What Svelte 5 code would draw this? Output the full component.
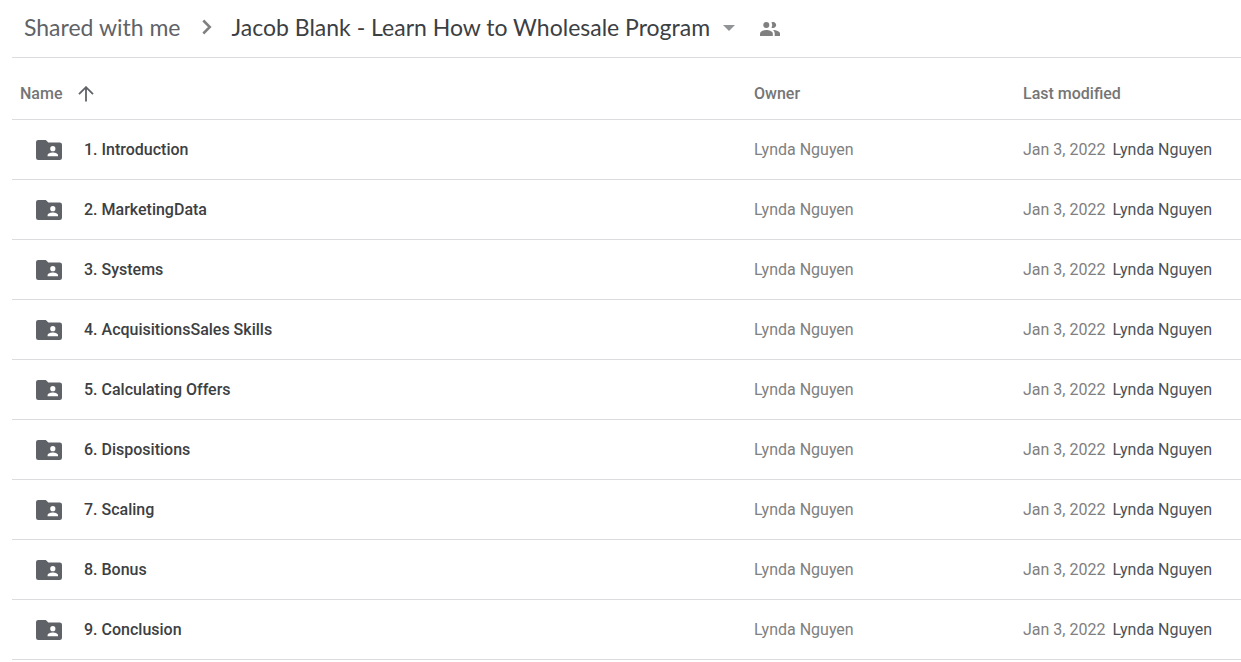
<script>
const folders = [
    '1. Introduction',
    '2. MarketingData',
    '3. Systems',
    '4. AcquisitionsSales Skills',
    '5. Calculating Offers',
    '6. Dispositions',
    '7. Scaling',
    '8. Bonus',
    '9. Conclusion'
].map((name) => ({
    name,
    owner: 'Lynda Nguyen',
    modified: 'Jan 3, 2022',
    modifiedBy: 'Lynda Nguyen'
}));

let ascending = $state(true);

let rows = $derived(ascending ? folders : [...folders].reverse());
</script>

<main class="drive">
    <nav class="path" aria-label="Folder path">
        <a class="crumb parent" href="#shared">Shared with me</a>
        <svg class="chevron" viewBox="0 0 10 16" aria-hidden="true">
            <path d="M1.3 1.5 7.8 8l-6.5 6.5" />
        </svg>
        <button class="crumb current">
            Jacob Blank - Learn How to Wholesale Program
            <svg class="caret" viewBox="0 0 12 6" aria-hidden="true">
                <path d="M0 0h12L6 6z" />
            </svg>
        </button>
        <button class="share" aria-label="Manage people">
            <svg viewBox="0 0 22 14" aria-hidden="true">
                <circle cx="7.3" cy="3" r="3" />
                <path d="M12.4.5a3 3 0 1 1 0 5 4.6 4.6 0 0 0 0-5z" />
                <path d="M1 14v-2.4C1 9.2 4.8 8 7.4 8s6.4 1.2 6.4 3.6V14z" />
                <path d="M14 8c2.7.2 7 1.3 7 3.6V14h-5.3v-2.4c0-1.6-.6-2.7-1.7-3.6z" />
            </svg>
        </button>
    </nav>

    <table>
        <thead>
            <tr>
                <th class="name">
                    <button class="sort" onclick={() => (ascending = !ascending)}>
                        Name
                        <svg class:down={!ascending} viewBox="0 0 16 16" aria-hidden="true">
                            <path d="M8 15.5V1.5M1 8.2l7-7 7 7" />
                        </svg>
                    </button>
                </th>
                <th class="owner">Owner</th>
                <th class="modified">Last modified</th>
            </tr>
        </thead>
        <tbody>
            {#each rows as row (row.name)}
                <tr>
                    <td class="name">
                        <div class="file">
                            <svg viewBox="0 0 26 20" aria-hidden="true">
                                <path d="M2.2 0h7.6l2.6 2.5h11.2A2.3 2.3 0 0 1 26 4.8v12.9a2.3 2.3 0 0 1-2.3 2.3H2.3A2.3 2.3 0 0 1 0 17.7V2.3A2.3 2.3 0 0 1 2.2 0z" />
                                <circle cx="16.8" cy="8.7" r="2.6" />
                                <path class="person" d="M11.6 16.2v-1.2c0-1.7 3.4-2.6 5.2-2.6s5.2.9 5.2 2.6v1.2z" />
                            </svg>
                            {row.name}
                        </div>
                    </td>
                    <td class="owner">{row.owner}</td>
                    <td class="modified">{row.modified} <span>{row.modifiedBy}</span></td>
                </tr>
            {/each}
        </tbody>
    </table>
</main>

<style>
:global(body) {
    margin: 0;
    background: #fff;
}

.drive {
    padding-left: 12px;
    font-family: Roboto, "Liberation Sans", sans-serif;
    font-size: 16px;
    line-height: 24px;
    color: #3c4043;
}

button {
    padding: 0;
    border: 0;
    background: none;
    font: inherit;
    color: inherit;
    cursor: pointer;
}

.path {
    display: flex;
    align-items: center;
    box-sizing: border-box;
    height: 58px;
    padding: 0 0 4px 12px;
    border-bottom: 1px solid #dadce0;
    white-space: nowrap;
}

.crumb {
    font-family: Lato, "Open Sans", sans-serif;
    font-size: 23px;
    line-height: 32px;
    text-decoration: none;
}

.parent {
    color: #5f6368;
}

.chevron {
    width: 10px;
    height: 16px;
    margin: 0 20px 0 21px;
    fill: none;
    stroke: #808080;
    stroke-width: 2.5;
}

.current {
    display: flex;
    align-items: center;
    gap: 13px;
}

.caret {
    width: 12px;
    height: 6px;
    margin-top: 2px;
    fill: #919497;
}

.share {
    display: flex;
    margin: 4px 0 0 24px;
}

.share svg {
    width: 22px;
    height: 14px;
    fill: #808080;
}

table {
    width: 100%;
    table-layout: fixed;
    border-collapse: separate;
    border-spacing: 0;
}

th,
td {
    height: 59px;
    padding: 0;
    border-bottom: 1px solid #dadce0;
    text-align: left;
    white-space: nowrap;
}

th {
    height: 62px;
    padding-top: 10px;
    box-sizing: border-box;
    font-weight: 500;
    color: #757575;
}

th.name {
    padding-left: 8px;
}

td.name {
    padding-left: 24px;
    font-weight: 500;
}

th.owner {
    width: 269px;
}

th.modified {
    width: 218px;
}

.sort {
    display: flex;
    align-items: center;
    gap: 16px;
}

.sort svg {
    width: 16px;
    height: 16px;
    fill: none;
    stroke: #5f6368;
    stroke-width: 1.8;
}

.sort svg.down {
    transform: rotate(180deg);
}

.file {
    display: flex;
    align-items: center;
    gap: 22px;
}

.file svg {
    width: 26px;
    height: 20px;
    fill: #5f6368;
}

.file circle,
.file .person {
    fill: #fff;
}

td.owner,
td.modified {
    color: #808080;
}

td.modified span {
    margin-left: 3px;
    color: #4d5156;
}
</style>
